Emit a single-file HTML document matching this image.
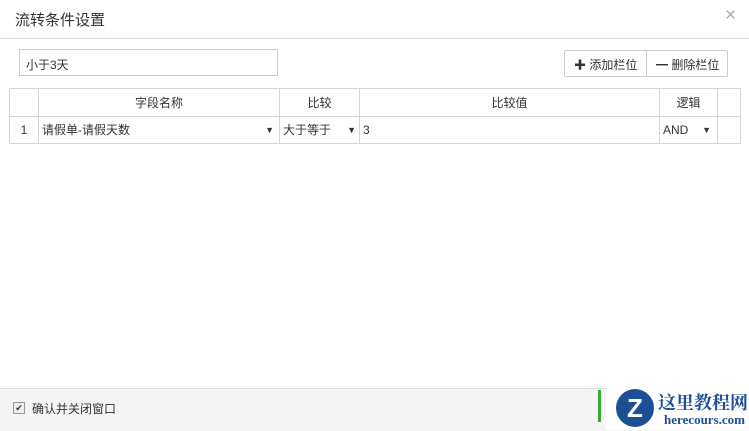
<!DOCTYPE html><html><head><meta charset="utf-8"><style>
body{margin:0;width:749px;height:430px;background:#fff;font-family:"Liberation Sans","Noto Sans CJK SC",sans-serif;font-size:12px;color:#333;position:relative;overflow:hidden}
.a{position:absolute}
td{border:1px solid #d4d4d4;padding:0 3px;height:26px;font-size:12px;vertical-align:middle}
table{border-collapse:collapse;position:absolute;left:9px;top:88px}
.ar{float:right;font-size:9px;line-height:26px}
.sel{line-height:26px}
</style></head><body>
<div class="a" style="left:15px;top:9px;font-size:15px;color:#333">流转条件设置</div>
<div class="a" style="left:725px;top:5px;font-size:19px;color:#aaa">×</div>
<div class="a" style="left:0;top:38px;width:749px;border-top:1px solid #ddd"></div>
<div class="a" style="left:19px;top:49px;width:259px;height:27px;border:1px solid #ccc;box-sizing:border-box;padding:6px 6px">小于3天</div>
<div class="a" style="left:564px;top:50px;width:164px;height:27px;border:1px solid #ccc;box-sizing:border-box;border-radius:2px;display:flex">
<div style="width:82px;border-right:1px solid #ccc;padding:5px 0 0 9px;box-sizing:border-box"><b>✚</b> 添加栏位</div>
<div style="padding:5px 0 0 9px"><b>━</b> 删除栏位</div></div>
<table><tr style="height:28px"><td style="width:22px"></td><td style="width:234px;text-align:center">字段名称</td><td style="width:73px;text-align:center">比较</td><td style="width:293px;text-align:center">比较值</td><td style="width:51px;text-align:center">逻辑</td><td style="width:16px"></td></tr>
<tr><td style="text-align:center">1</td><td class="sel">请假单-请假天数<span class="ar" style="margin-right:2px">▼</span></td><td class="sel">大于等于<span class="ar">▼</span></td><td>3</td><td class="sel">AND<span class="ar" style="margin-right:3px">▼</span></td><td></td></tr></table>
<div class="a" style="left:0;top:388px;width:749px;height:42px;background:#f5f5f5;border-top:1px solid #ddd"></div>
<div class="a" style="left:13px;top:402px;width:10px;height:10px;border:1px solid #999;background:#eee;font-size:9px;line-height:10px;text-align:center">✔</div>
<div class="a" style="left:32px;top:400px">确认并关闭窗口</div>
<div class="a" style="left:598px;top:390px;width:3px;height:32px;background:#3a3"></div>
<div class="a" style="left:606px;top:385px;width:52px;height:45px;background:#fff"></div>
<div class="a" style="left:616px;top:389px;width:38px;height:38px;border-radius:50%;background:#1d4f95;color:#fff;font-size:26px;font-weight:bold;text-align:center;line-height:38px">Z</div>
<div class="a" style="left:656px;top:388px;width:93px;height:42px;background:#fff"></div>
<div class="a" style="left:658px;top:389px;font-family:'Noto Serif CJK SC',serif;font-weight:bold;font-size:18px;color:#1d4f95">这里教程网</div>
<div class="a" style="left:664px;top:412px;font-family:'Liberation Serif',serif;font-weight:bold;font-size:13px;color:#1d4f95">herecours.com</div>
</body></html>
